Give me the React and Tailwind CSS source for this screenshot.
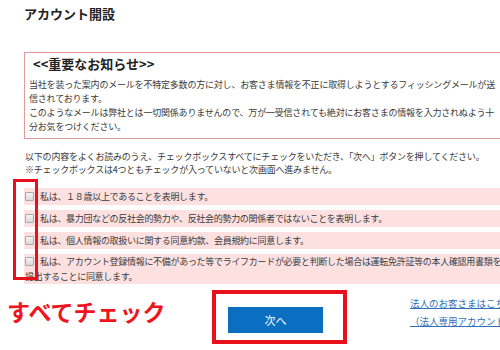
import React from 'react';

const rows = [
  ['私は、１８歳以上であることを表明します。'],
  ['私は、暴力団などの反社会的勢力や、反社会的勢力の関係者ではないことを表明します。'],
  ['私は、個人情報の取扱いに関する同意約款、会員規約に同意します。'],
];

function Box() {
  return (
    <span className="inline-block w-[9px] h-[9px] shrink-0 rounded-[1px] border border-[#a9a9a9] bg-gradient-to-b from-[#f4f4f4] to-[#d9d9d9]" />
  );
}

export default function App() {
  return (
    <div className="relative w-[500px] h-[350px] overflow-hidden bg-white text-[#3a3a3a] font-['Noto_Sans_CJK_JP','Noto_Sans',sans-serif]">
      {/* Title */}
      <h1 className="pl-[24px] pt-[7px] text-[13px] leading-[14px] font-bold text-[#222]">アカウント開設</h1>

      {/* Notice */}
      <div className="mt-[31px] ml-[24px] w-[520px] border border-[#e49a9a] pt-[4px] pb-[4px] pl-[4px]">
        <div className="pl-[4px] text-[13px] leading-[14px] font-bold text-[#222]">&lt;&lt;重要なお知らせ&gt;&gt;</div>
        <div className="mt-[7px] text-[9px] leading-[14px] tracking-[-0.2px] whitespace-nowrap">
          <div>当社を装った案内のメールを不特定多数の方に対し、お客さま情報を不正に取得しようとするフィッシングメールが送</div>
          <div>信されております。</div>
          <div>このようなメールは弊社とは一切関係ありませんので、万が一受信されても絶対にお客さまの情報を入力されぬよう十</div>
          <div>分お気をつけください。</div>
        </div>
      </div>

      {/* Instructions */}
      <div className="mt-[11px] pl-[25px] text-[9px] leading-[13px] tracking-[-0.2px] whitespace-nowrap">
        <div>以下の内容をよくお読みのうえ、チェックボックスすべてにチェックをいただき、「次へ」ボタンを押してください。</div>
        <div>※チェックボックスは4つともチェックが入っていないと次画面へ進みません。</div>
      </div>

      {/* Agreement rows */}
      <div className="mt-[12px] ml-[24px] w-[480px] flex flex-col gap-[5px] text-[9px] tracking-[-0.3px] whitespace-nowrap">
        {rows.map(([t]) => (
          <div key={t} className="flex items-center h-[17px] bg-[#fde1e1] pl-[1px]">
            <Box />
            <span className="ml-[6px] leading-[17px]">{t}</span>
          </div>
        ))}
        <div className="bg-[#fde1e1] pl-[1px] leading-[15px]">
          <div className="flex items-center h-[15px]">
            <Box />
            <span className="ml-[6px]">私は、アカウント登録情報に不備があった等でライフカードが必要と判断した場合は運転免許証等の本人確認用書類を</span>
          </div>
          <div className="h-[15px]">提出することに同意します。</div>
        </div>
      </div>

      {/* Bottom */}
      <div className="mt-[6px] flex items-start">
        <div className="w-[212px] shrink-0 pl-[7px] mt-[10px] text-[23px] leading-[23px] font-bold text-[#ee1420] whitespace-nowrap">すべてチェック</div>
        <div className="w-[135px] h-[54px] shrink-0 border-4 border-[#e8101a] pl-[12px] pt-[12px]">
          <button className="w-[95px] h-[26px] bg-[#0a6fc0] text-white text-[11px] leading-[26px]">次へ</button>
        </div>
        <div className="ml-[63px] shrink-0 mt-[4px] text-[9.5px] leading-[18px] text-[#2f6fb8] underline whitespace-nowrap">
          <div>法人のお客さまはこちら</div>
          <div>（法人専用アカウント）</div>
        </div>
      </div>

      {/* Annotation frame over checkboxes */}
      <div className="absolute left-[13px] top-[179px] w-[25px] h-[101px] border-[3.5px] border-[#e8101a]" />
    </div>
  );
}
